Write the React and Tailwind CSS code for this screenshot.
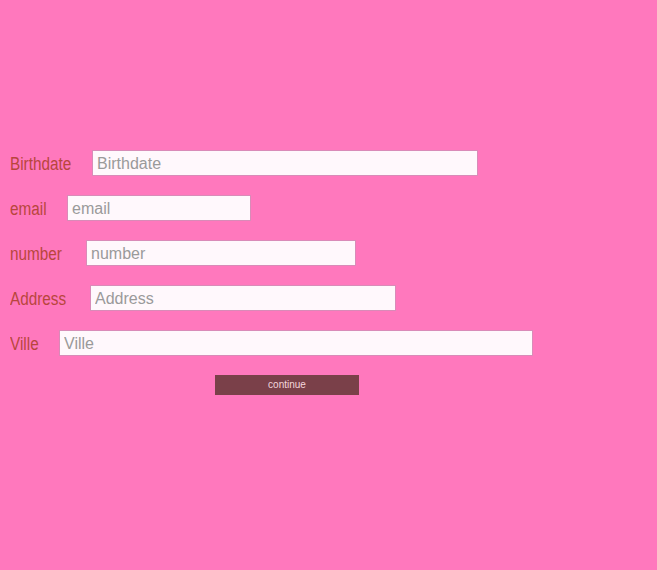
const fields = [
  { label: "Birthdate", labelWidth: "w-[82px]", width: "w-[386px]" },
  { label: "email", labelWidth: "w-[57px]", width: "w-[184px]" },
  { label: "number", labelWidth: "w-[76px]", width: "w-[270px]" },
  { label: "Address", labelWidth: "w-[80px]", width: "w-[306px]" },
  { label: "Ville", labelWidth: "w-[49px]", width: "w-[474px]" },
];

export default function App() {
  return (
    <div className="min-h-[570px] w-full bg-[#ff78bd] pt-[150px] pl-[10px] font-['Liberation_Sans',Arial,sans-serif]">
      <form className="flex flex-col gap-[19px]">
        {fields.map((f) => (
          <div key={f.label} className="flex items-center h-[26px]">
            <label className={`${f.labelWidth} shrink-0 pt-[3px]`}>
              <span className="inline-block origin-left scale-x-[0.85] text-[18px] text-[#b8463c] leading-none whitespace-nowrap">
                {f.label}
              </span>
            </label>
            <input
              type="text"
              placeholder={f.label}
              className={`${f.width} h-[26px] bg-[#fff8fc] border border-[#d98bb8] px-[4px] pt-[2px] text-[16px] text-[#555] placeholder:text-[#9a9a9a] outline-none`}
            />
          </div>
        ))}
      </form>
      <button
        type="button"
        className="mt-[19px] ml-[205px] w-[144px] h-[20px] bg-[#7a4049] text-[#f4d6dc] text-[10px] leading-none"
      >
        continue
      </button>
    </div>
  );
}
